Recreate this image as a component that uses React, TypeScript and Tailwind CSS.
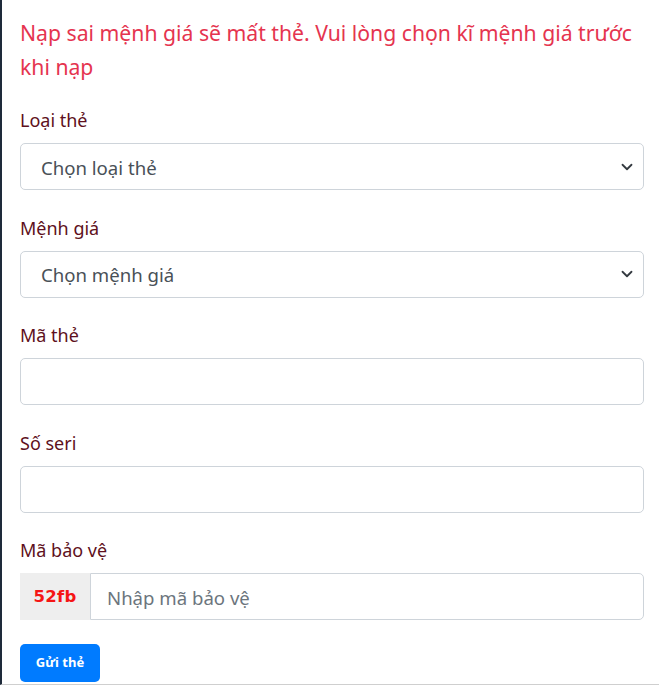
import { useState } from "react";

const font = { fontFamily: '"Noto Sans", "Open Sans", sans-serif' };

function Chevron() {
  return (
    <svg
      className="pointer-events-none absolute right-[10px] top-1/2 -translate-y-1/2"
      width="14"
      height="12"
      viewBox="0 0 16 16"
      fill="none"
    >
      <path d="M2 5l6 6 6-6" stroke="#343a40" strokeWidth="2.4" strokeLinecap="round" strokeLinejoin="round" />
    </svg>
  );
}

function Field({ label, children }: { label: string; children: React.ReactNode }) {
  return (
    <div className="mb-[23.6px]">
      <label className="block mb-[9px] text-[18px] leading-[28px] text-[#5e1020]">{label}</label>
      {children}
    </div>
  );
}

export default function App() {
  const [type, setType] = useState("");
  const [amount, setAmount] = useState("");

  const inputCls =
    "block w-full h-[47px] rounded-[5px] border border-[#ced4da] bg-white px-[20px] text-[18.6px] text-[#495057] outline-none";

  return (
    <div className="min-h-screen bg-white" style={font}>
      <div className="border-l-2 border-[#1e2a3a] border-b border-b-[#cfcfcf] pl-[18px] pr-[15px] pt-[16px] pb-[2px]">
        <p className="mb-[22px] text-[21.2px] leading-[34px] text-[#e5344f]">
          Nạp sai mệnh giá sẽ mất thẻ. Vui lòng chọn kĩ mệnh giá trước khi nạp
        </p>

        <Field label="Loại thẻ">
          <div className="relative">
            <select value={type} onChange={(e) => setType(e.target.value)} className={`${inputCls} appearance-none pt-[2px]`}>
              <option value="">Chọn loại thẻ</option>
              <option value="viettel">Viettel</option>
              <option value="mobifone">Mobifone</option>
              <option value="vinaphone">Vinaphone</option>
            </select>
            <Chevron />
          </div>
        </Field>

        <Field label="Mệnh giá">
          <div className="relative">
            <select value={amount} onChange={(e) => setAmount(e.target.value)} className={`${inputCls} appearance-none pt-[2px]`}>
              <option value="">Chọn mệnh giá</option>
              <option value="10000">10.000</option>
              <option value="20000">20.000</option>
              <option value="50000">50.000</option>
              <option value="100000">100.000</option>
            </select>
            <Chevron />
          </div>
        </Field>

        <Field label="Mã thẻ">
          <input type="text" className={inputCls} />
        </Field>

        <Field label="Số seri">
          <input type="text" className={inputCls} />
        </Field>

        <Field label="Mã bảo vệ">
          <div className="flex h-[47px]">
            <div
              className="flex w-[70px] shrink-0 items-center justify-center bg-[#eeeeee] text-[16.5px] font-bold tracking-[0.3px] text-[#f51515]"
              style={{ fontFamily: '"DejaVu Sans", Verdana, sans-serif' }}
            >
              52fb
            </div>
            <input
              type="text"
              placeholder="Nhập mã bảo vệ"
              className="block h-full flex-1 min-w-0 rounded-r-[5px] border border-[#ced4da] bg-white px-[16px] pt-[2px] text-[18.6px] text-[#495057] placeholder:text-[#6c757d] outline-none"
            />
          </div>
        </Field>

        <button className="h-[38px] w-[80px] rounded-[5px] bg-[#007bff] text-[13px] font-bold text-white">
          Gửi thẻ
        </button>
      </div>
    </div>
  );
}
